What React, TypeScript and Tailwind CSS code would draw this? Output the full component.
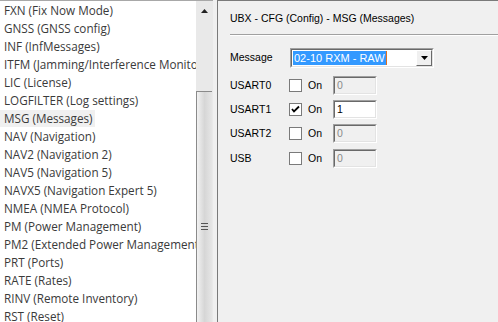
import React from "react";

const items = [
  "FXN (Fix Now Mode)",
  "GNSS (GNSS config)",
  "INF (InfMessages)",
  "ITFM (Jamming/Interference Monitor)",
  "LIC (License)",
  "LOGFILTER (Log settings)",
  "MSG (Messages)",
  "NAV (Navigation)",
  "NAV2 (Navigation 2)",
  "NAV5 (Navigation 5)",
  "NAVX5 (Navigation Expert 5)",
  "NMEA (NMEA Protocol)",
  "PM (Power Management)",
  "PM2 (Extended Power Management)",
  "PRT (Ports)",
  "RATE (Rates)",
  "RINV (Remote Inventory)",
  "RST (Reset)",
];

function Sunken({ children, className = "" }: { children?: React.ReactNode; className?: string }) {
  return (
    <div className={`border border-t-[#a0a0a0] border-l-[#a0a0a0] border-r-white border-b-white ${className}`}>
      <div className="w-full h-full border border-t-[#696969] border-l-[#696969] border-r-[#e3e3e3] border-b-[#e3e3e3]">
        {children}
      </div>
    </div>
  );
}

function Row({ label, checked, value, top }: { label: string; checked: boolean; value: string; top: string }) {
  return (
    <div className={`flex items-center h-[19px] ${top}`}>
      <div className="w-[59px]">{label}</div>
      <div className="w-[13px] h-[13px] border border-[#7a7a7a] bg-white flex items-center justify-center">
        {checked && (
          <svg width="9" height="9" viewBox="0 0 9 9">
            <path d="M1 4 L3 6.5 L8 1.5" stroke="#000" strokeWidth="1.8" fill="none" />
          </svg>
        )}
      </div>
      <div className="ml-[6px] w-[24px]">On</div>
      <Sunken className="w-[44px] h-[19px] ml-[1px]">
        <div className={`w-full h-full pl-[2px] leading-[15px] ${checked ? "bg-white text-black" : "bg-[#f0f0f0] text-[#8a8a8a]"}`}>
          {value}
        </div>
      </Sunken>
    </div>
  );
}

export default function App() {
  return (
    <div className="w-[498px] h-[322px] flex overflow-hidden bg-[#f0f0f0]">
      {/* list */}
      <div className="w-[196px] h-full bg-white border-t border-[#a8a8a8] overflow-hidden"
        style={{ fontFamily: '"Open Sans", sans-serif' }}>
        {items.map((it) => (
          <div key={it} className="h-[18px] flex items-center">
            <span
              className={`whitespace-nowrap pl-[4px] pr-[2px] h-[17px] leading-[17px] text-[11.7px] text-[#3a3a3a] ${it.startsWith("MSG") ? "bg-[#f0f0f0]" : ""}`}
            >
              {it}
            </span>
          </div>
        ))}
      </div>
      {/* scrollbar */}
      <div className="w-[17px] h-full bg-[#e9e9e9] border-t border-[#a8a8a8] flex flex-col">
        <div className="h-[17px] flex items-center justify-center pt-[3px]">
          <svg width="7" height="4" viewBox="0 0 7 4">
            <path d="M3.5 0 L7 4 L0 4 Z" fill="#222" />
          </svg>
        </div>
        <div className="h-[73px]" />
        <div className="flex-1 w-[16px] border-l border-t border-[#8a8a8a] bg-gradient-to-r from-[#f2f2f2] via-[#d6d6d6] to-[#e6e6e6] flex items-center justify-center">
          <div className="flex flex-col gap-[2px] mt-[38px]">
            <div className="w-[7px] h-[1px] bg-[#555]" />
            <div className="w-[7px] h-[1px] bg-[#555]" />
            <div className="w-[7px] h-[1px] bg-[#555]" />
          </div>
        </div>
      </div>
      {/* splitter */}
      <div className="w-[4px] h-full bg-[#f0f0f0]" />
      {/* right panel */}
      <div
        className="flex-1 h-full border-l border-t border-[#7a7a7a] bg-[#f0f0f0] text-[10.5px] text-black"
        style={{ fontFamily: '"Liberation Sans", Arial, sans-serif' }}
      >
        <div className="pl-[12px] pt-[11px] h-[33px] leading-[13px]">UBX - CFG (Config) - MSG (Messages)</div>
        <div className="ml-[12px] h-[2px] border-t border-[#a0a0a0] border-b border-b-white" />
        <div className="pl-[12px]">
          <div className="flex items-center h-[20px] mt-[12px]">
            <div className="w-[60px]">Message</div>
            <Sunken className="w-[144px] h-[20px] bg-white">
              <div className="flex h-full bg-white items-center">
                <div className="ml-[1px] h-[14px] bg-[#3399ff] text-white leading-[14px] px-[1px] text-[11px] whitespace-nowrap">
                  02-10 RXM - RAW
                </div>
                <div className="w-[1px] h-[14px] bg-[#e07020]" />
                <div className="flex-1" />
                <div className="w-[16px] h-[16px] bg-[#f0f0f0] border border-t-white border-l-white border-r-[#696969] border-b-[#696969] flex items-center justify-center">
                  <svg width="7" height="4" viewBox="0 0 7 4">
                    <path d="M0 0 L7 0 L3.5 4 Z" fill="#000" />
                  </svg>
                </div>
              </div>
            </Sunken>
          </div>
          <Row label="USART0" checked={false} value="0" top="mt-[8px]" />
          <Row label="USART1" checked={true} value="1" top="mt-[5px]" />
          <Row label="USART2" checked={false} value="0" top="mt-[5px]" />
          <Row label="USB" checked={false} value="0" top="mt-[6px]" />
        </div>
      </div>
    </div>
  );
}
